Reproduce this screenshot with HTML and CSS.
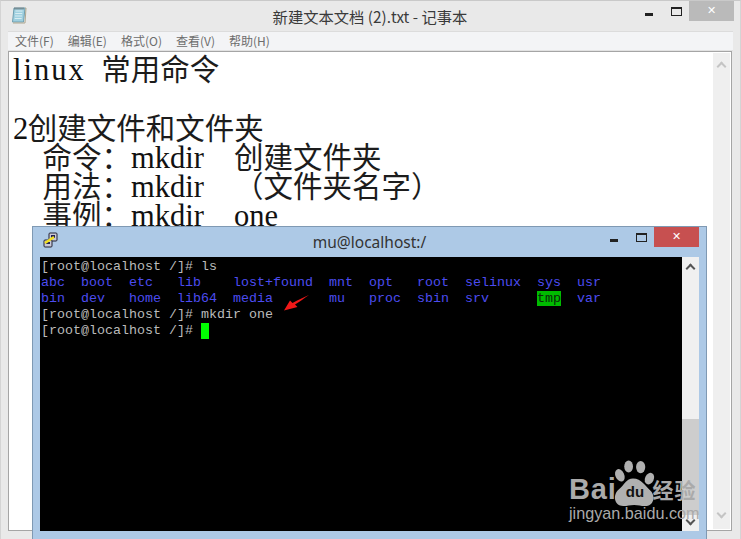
FILE: index.html
```html
<!DOCTYPE html>
<html lang="zh">
<head>
<meta charset="utf-8">
<title>新建文本文档 (2).txt - 记事本</title>
<link rel="stylesheet" href="styles.css">
</head>
<body>
<div class="desktop">
  <section class="notepad">
    <header class="titlebar np-title">
      <svg class="np-icon" width="18" height="18" viewBox="0 0 18 18">
        <path d="M4 2h11l-1.500 14H2.500z" fill="#9fd0e0" stroke="#6f9fb0"/>
        <path d="M5.500 5h7M5.200 7.500h7M5 10h7M4.700 12.500h7" stroke="#d8edf2"/>
        <path d="M5 1.500v2M7 1.500v2M9 1.500v2M11 1.500v2M13 1.500v2" stroke="#666"/>
        <path d="M15 2l1 0-1 15H3" fill="none" stroke="#b0a890"/>
      </svg>
      <div class="np-name">新建文本文档 (2).txt - 记事本</div>
      <div class="controls np-controls">
        <span class="ctl"><i class="min"></i></span>
        <span class="ctl"><i class="max"></i></span>
        <span class="close np-close">✕</span>
      </div>
    </header>
    <nav class="menu">
      <span>文件(F)</span><span>编辑(E)</span><span>格式(O)</span><span>查看(V)</span><span>帮助(H)</span>
    </nav>
    <div class="editor">
      <div class="doc">
        <div class="line"><span class="en w-linux">linux</span><span class="sp"></span>常用命令</div>
        <div class="line">&nbsp;</div>
        <div class="line"><span class="en">2</span>创建文件和文件夹</div>
        <div class="line"><span class="sp2"></span>命令：<span class="en w-mkdir">mkdir</span><span class="sp2"></span>创建文件夹</div>
        <div class="line"><span class="sp2"></span>用法：<span class="en w-mkdir">mkdir</span><span class="sp2"></span>（文件夹名字）</div>
        <div class="line"><span class="sp2"></span>事例：<span class="en w-mkdir">mkdir</span><span class="sp2"></span><span class="en w-one">one</span></div>
      </div>
      <div class="np-scroll"><span class="chev up"></span><span class="chev down"></span></div>
    </div>
  </section>

  <section class="terminal">
    <header class="titlebar term-title">
      <svg class="putty" width="18" height="16" viewBox="0 0 18 16">
        <rect x="8" y="1" width="8" height="8" rx="1" fill="#c8c8d8" stroke="#223"/>
        <rect x="10" y="3" width="4" height="3" fill="#225"/>
        <rect x="3" y="8" width="8" height="7" rx="1" fill="#c8c8d8" stroke="#223"/>
        <rect x="5" y="10" width="4" height="2" fill="#225"/>
        <path d="M4 11l9-6" stroke="#f2e020" stroke-width="2.500"/>
      </svg>
      <div class="term-name">mu@localhost:/</div>
      <div class="controls term-controls">
        <span class="ctl"><i class="min"></i></span>
        <span class="ctl"><i class="max"></i></span>
        <span class="close term-close">✕</span>
      </div>
    </header>
    <div class="term-body">
      <pre class="screen">[root@localhost /]# ls
<b>abc</b>  <b>boot</b>  <b>etc</b>   <b>lib</b>    <b>lost+found</b>  <b>mnt</b>  <b>opt</b>   <b>root</b>  <b>selinux</b>  <b>sys</b>  <b>usr</b>
<b>bin</b>  <b>dev</b>   <b>home</b>  <b>lib64</b>  <b>media</b>       <b>mu</b>   <b>proc</b>  <b>sbin</b>  <b>srv</b>      <em>tmp</em>  <b>var</b>
[root@localhost /]# mkdir one
[root@localhost /]# <u class="cursor"> </u></pre>
      <div class="term-scroll">
        <span class="chev up dark"></span>
        <span class="thumb"></span>
        <span class="chev down dark"></span>
      </div>
    </div>
  </section>

  <svg class="arrow" width="27" height="18" viewBox="0 0 27 18">
    <path d="M1 16.500L7 6.500 9.500 9C15 6 21 3 26 1 21 4.500 16 8 12 10.500L14.500 13z" fill="#f01818"/>
  </svg>

  <div class="watermark">
    <svg class="paw" width="46" height="46" viewBox="0 0 42 42">
      <ellipse cx="9" cy="14" rx="4" ry="6" transform="rotate(-25 9 14)"/>
      <ellipse cx="17" cy="6" rx="4" ry="5.500"/>
      <ellipse cx="28" cy="6.500" rx="4.200" ry="5.500"/>
      <ellipse cx="36" cy="17" rx="4" ry="5.500" transform="rotate(25 36 17)"/>
      <path d="M21 17C15 17 13 23 8 27 2 32 4 42 12 42c4 0 6-1 10-1s6 1 10 1c8 0 10-9 5-14-5-4-8-11-16-11z"/>
    </svg>
    <div class="wm-du">du</div>
    <div class="wm-brand"><span class="wm-bai">Bai</span><span class="wm-gap"></span><span class="wm-cn">经验</span></div>
    <div class="wm-url">jingyan.baidu.com</div>
  </div>
</div>
</body>
</html>
```
FILE: styles.css
```css
* { box-sizing: border-box; }
html, body { margin: 0; padding: 0; }
body { width: 741px; height: 539px; overflow: hidden; background: #e9e9e9; }
.desktop { position: relative; width: 741px; height: 539px; overflow: hidden; }

.notepad {
  display: flex; flex-direction: column; height: 539px;
  background: #e9e9e9; border-top: 1px solid #c9c9c9; border-left: 1px solid #d4d4d4;
  border-right: 1px solid #d4d4d4;
  padding: 0 8px 8px 7px;
}
.titlebar { display: flex; align-items: flex-start; position: relative; }
.np-title { height: 30px; }
.np-icon { position: absolute; left: 2px; top: 5px; }
.np-name {
  width: 100%; text-align: center; padding-top: 6px;
  font: 15.300px/18px "Noto Sans CJK SC", sans-serif; color: #3a3a3a;
}
.controls { position: absolute; top: 0; display: flex; align-items: flex-start; }
.np-controls { right: -2px; }
.term-controls { right: 0; }
.ctl { width: 26px; height: 20px; position: relative; display: block; }
.min { position: absolute; left: 8px; top: 12px; width: 8px; height: 3px; background: #222; }
.max { position: absolute; left: 8px; top: 6px; width: 11px; height: 9px; border: solid #222; border-width: 2px 1px 1px; }
.close {
  width: 45px; height: 20px; color: #fff; text-align: center;
  font: bold 11px/20px "DejaVu Sans", sans-serif;
}
.np-close { background: #bababa; }
.term-close { background: #c75050; }

.menu {
  height: 20px; background: #f3f4f6; border-top: 1px solid #dcdcdc; border-bottom: 1px solid #e2e2e2;
  display: flex; gap: 14px; padding-left: 7px; margin-right: -1px;
  font: 12px/18px "Noto Sans CJK SC", sans-serif; color: #6d6d6d;
}
.editor {
  flex: 1; display: flex; position: relative; background: #fff;
  border: 1px solid #a5a5a5; padding: 1px;
}
.doc { flex: 1; padding: 0 0 0 3px; }
.line {
  height: 29.250px; line-height: 29.250px; white-space: pre;
  font-family: "Noto Sans CJK SC", sans-serif; font-size: 29.500px; color: #1c1c1c;
}
.en { display: inline-block; width: 14.700px; font-family: "Liberation Serif", serif; font-size: 30.500px; color: #111; }
.w-linux { width: 73.500px; letter-spacing: 2px; }
.w-mkdir { width: 73.500px; }
.w-one { width: 44px; }
.sp { display: inline-block; width: 14.700px; }
.sp2 { display: inline-block; width: 29.500px; }

.np-scroll {
  width: 17px; background: #efefef; display: flex; flex-direction: column; justify-content: space-between;
  align-items: center; padding: 6px 0;
}
.chev { display: block; width: 7px; height: 7px; border-left: 2px solid #c4c4c4; border-top: 2px solid #c4c4c4; flex: none; }
.chev.up { transform: rotate(45deg); margin-top: 4px; }
.chev.down { transform: rotate(225deg); margin-bottom: 6px; }
.chev.dark { border-color: #555; }

.terminal {
  position: absolute; left: 32px; top: 226px; width: 675px; height: 313px;
  background: #adc9e6; border: 1px solid #7f99b3; border-width: 1px 1px 0;
  display: flex; flex-direction: column; padding: 0 7px 8px;
}
.term-title { height: 30px; flex: none; }
.putty { position: absolute; left: 1px; top: 5px; }
.term-name {
  width: 100%; text-align: center; padding-top: 6px;
  font: 15.500px/18px "Noto Sans", "Open Sans", sans-serif; color: #333;
}
.term-body { flex: 1; display: flex; min-height: 0; background: #000; }
.screen {
  flex: 1; margin: 0; padding: 2px 0 0 1px; overflow: hidden;
  font: 13.330px/16px "Liberation Mono", monospace; color: #bbb;
}
.screen b { font-weight: 400; color: #4c4cf0; }
.screen em { font-style: normal; background: #00bb00; color: #0a2a0a; }
.cursor { display: inline-block; width: 8px; height: 16px; background: #00ff00; text-decoration: none; vertical-align: top; }
.term-scroll {
  width: 17px; flex: none; background: #f0f0f0; display: flex; flex-direction: column; align-items: center;
  padding: 4px 0;
}
.term-scroll .chev.up { margin-top: 4px; }
.term-scroll .thumb { width: 17px; height: 96px; background: #cdcdcd; margin-top: auto; margin-bottom: 2px; }
.term-scroll .chev.down { margin-bottom: 3px; }

.arrow { position: absolute; left: 283px; top: 294px; }

.watermark { position: absolute; left: 568px; top: 458px; width: 140px; height: 70px; }
.paw { position: absolute; left: 42px; top: 2px; fill: #b0b0b0; }
.wm-brand { position: absolute; left: 1px; top: 14px; display: flex; align-items: center; font: bold 29px/34px "Liberation Sans", sans-serif; letter-spacing: 0.800px; color: #aaa; }
.wm-gap { width: 36px; }
.wm-cn { font: bold 21px/34px "Noto Sans CJK SC", sans-serif; letter-spacing: 1px; color: #aaa; }
.wm-du { position: absolute; left: 55px; top: 25px; width: 24px; text-align: center; font: bold 15px/18px "Liberation Sans", sans-serif; color: #111; }
.wm-url { position: absolute; left: 1px; top: 45px; font: 16.200px/20px "Liberation Sans", sans-serif; color: #aaa; white-space: nowrap; }
```
